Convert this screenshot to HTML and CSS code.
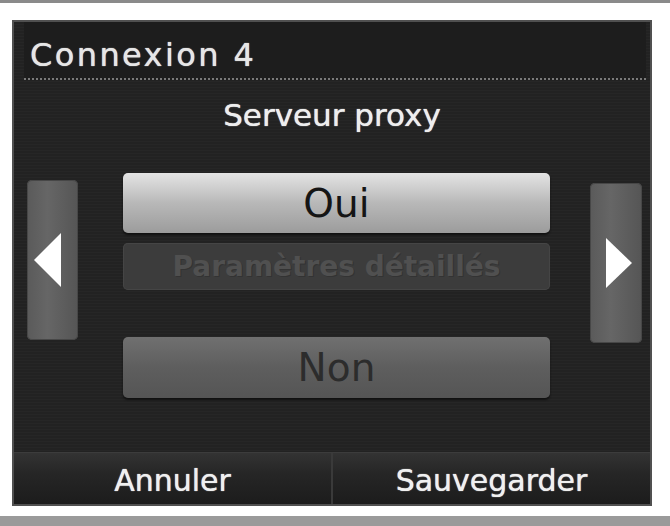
FILE: index.html
```html
<!DOCTYPE html>
<html lang="fr">
<head>
    <meta charset="UTF-8">
    <meta name="viewport" content="width=device-width, initial-scale=1.0">
    <title>Connexion 4</title>
    <link rel="stylesheet" href="styles.css">
</head>
<body>
    <div class="frame">
        <div class="screen">
            <div class="header">
                <h1 class="title">Connexion 4</h1>
            </div>
            <h2 class="subtitle">Serveur proxy</h2>

            <div class="main">
                <button class="arrow arrow-left">
                    <svg width="28" height="56" viewBox="0 0 28 56"><polygon points="0,28 27,1 27,55" fill="#fff"/></svg>
                </button>

                <div class="choices">
                    <button class="choice choice-on">Oui</button>
                    <button class="choice choice-off" disabled>Paramètres détaillés</button>
                    <button class="choice choice-no">Non</button>
                </div>

                <button class="arrow arrow-right">
                    <svg width="28" height="52" viewBox="0 0 28 52"><polygon points="1,1 27,26 1,51" fill="#fff"/></svg>
                </button>
            </div>

            <div class="footer">
                <button class="foot-btn">Annuler</button>
                <button class="foot-btn">Sauvegarder</button>
            </div>
        </div>
    </div>
</body>
</html>
```

FILE: styles.css
```css
* {
    box-sizing: border-box;
}

body {
    margin: 0;
    background-color: #9a9a9a;
    font-family: "DejaVu Sans", "Liberation Sans", sans-serif;
}

.frame {
    width: 670px;
    height: 516px;
    background-color: #fff;
    border-top: 3px solid #8a8a8a;
    padding: 17px 0 0 12px;
}

.screen {
    width: 640px;
    height: 486px;
    border: 2px solid #505050;
    background-color: #222;
    background-image: repeating-linear-gradient(to bottom, #222 0, #222 2px, #262626 2px, #262626 3px);
    display: flex;
    flex-direction: column;
}

.screen > * {
    flex-shrink: 0;
}

.header {
    height: 58px;
    margin: 0 4px 0 10px;
    border-bottom: 2px dotted #7a7a7a;
    display: flex;
    align-items: center;
    background-color: #1d1d1d;
}

.title {
    margin: 0;
    padding: 10px 0 0 6px;
    color: #e6e6e6;
    font-size: 32px;
    font-weight: normal;
    letter-spacing: 2.4px;
    text-shadow: 0 0 1px #fff;
}

.subtitle {
    margin: 0;
    padding-top: 17px;
    text-align: center;
    color: #eee;
    font-size: 31px;
    font-weight: normal;
    height: 93px;
    text-shadow: 0 0 1px #fff;
}

button {
    font-family: inherit;
    border: none;
    padding: 0;
}

.main {
    height: 279px;
    display: flex;
    padding-left: 13px;
}

.arrow {
    width: 51px;
    height: 160px;
    margin-top: 7px;
    border-radius: 5px;
    background: linear-gradient(to right, #5a5a5a, #666 40%, #555);
    box-shadow: inset 0 0 0 1px #474747;
    display: flex;
    align-items: center;
    justify-content: center;
}

.arrow-left {
    padding-right: 10px;
}

.arrow-right {
    width: 52px;
    margin-top: 10px;
    margin-left: 40px;
    padding-left: 6px;
}

.choices {
    width: 427px;
    margin-left: 45px;
    display: flex;
    flex-direction: column;
}

.choice {
    width: 100%;
    border-radius: 5px;
    font-size: 39px;
}

.choice-on {
    height: 60px;
    color: #151515;
    background: linear-gradient(to bottom, #e4e4e4, #b8b8b8 50%, #9c9c9c);
    box-shadow: 0 2px 2px #111;
}

.choice-off {
    height: 47px;
    margin-top: 10px;
    color: #505050;
    font-size: 28px;
    font-weight: bold;
    background-color: #3c3c3c;
    box-shadow: inset 0 0 0 1px #454545;
    text-shadow: 1px 1px 0 #333;
}

.choice-no {
    height: 61px;
    margin-top: 47px;
    color: #2c2c2c;
    background: linear-gradient(to bottom, #707070, #5e5e5e 50%, #555);
    box-shadow: 0 2px 2px #111;
}

.footer {
    height: 52px;
    display: flex;
    border-top: 1px solid #3c3c3c;
}

.foot-btn {
    flex: 1;
    color: #f0f0f0;
    font-size: 30px;
    padding-top: 4px;
    background: linear-gradient(to bottom, #333, #262626 40%, #1c1c1c);
    text-shadow: 0 0 1px #fff;
}

.foot-btn + .foot-btn {
    border-left: 2px solid #3a3a3a;
}
```
